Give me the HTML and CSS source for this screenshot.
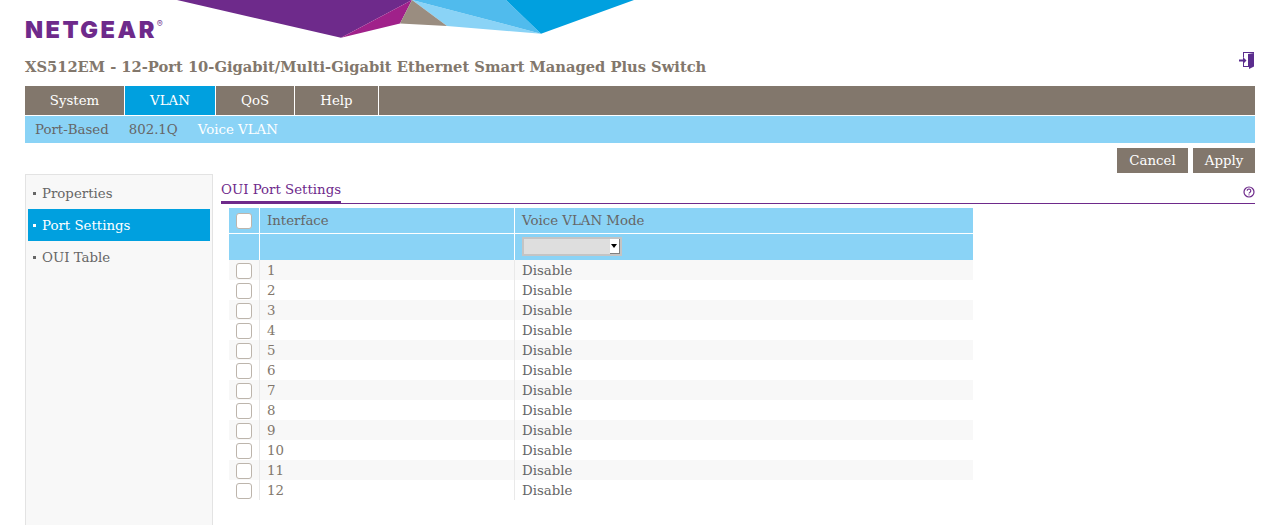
FILE: index.html
```html
<!DOCTYPE html>
<html lang="en">
<head>
<meta charset="utf-8">
<title>NETGEAR XS512EM</title>
<link rel="stylesheet" href="styles.css">
</head>
<body>
<div class="page">
  <header class="brand">
    <div class="logo">NETGEAR<sup class="reg">®</sup></div>
    <svg class="banner" width="460" height="38" viewBox="177 0 460 38" aria-hidden="true">
      <polygon fill="#6e2a8b" points="177,0 412,0 341,37.7"/>
      <polygon fill="#a0218a" points="341,37.7 412,0 400,23.5"/>
      <polygon fill="#8ad3f6" points="412,0 447,26 541,33.7"/>
      <polygon fill="#9a8d80" points="412,0 400,23.5 447,26"/>
      <polygon fill="#50bbed" points="412,0 506,0 541,33.7"/>
      <polygon fill="#00a0df" points="506,0 634,0 541,33.7"/>
    </svg>
  </header>
  <div class="titlebar">
    <h1 class="title">XS512EM - 12-Port 10-Gigabit/Multi-Gigabit Ethernet Smart Managed Plus Switch</h1>
    <svg class="exit" width="16" height="17" viewBox="0 0 16 17" aria-hidden="true">
      <path fill="#5b2d8e" d="M4 0h11v1H5v4.500H4zM4 11h1v3h4v1H4z"/>
      <path fill="#5b2d8e" d="M9 2l6-1v13.500l-5 2.500v-2H9z"/>
      <path fill="#5b2d8e" d="M0 7.500h4V5l3.500 3.500L4 12V9.500H0z"/>
    </svg>
  </div>
  <nav class="tabs">
    <a class="tab tab-system">System</a>
    <a class="tab tab-vlan active">VLAN</a>
    <a class="tab tab-qos">QoS</a>
    <a class="tab tab-help">Help</a>
  </nav>
  <nav class="subtabs">
    <a class="subtab">Port-Based</a>
    <a class="subtab">802.1Q</a>
    <a class="subtab current">Voice VLAN</a>
  </nav>
  <div class="actions">
    <button class="btn btn-cancel">Cancel</button>
    <button class="btn btn-apply">Apply</button>
  </div>
  <div class="main">
    <aside class="side">
      <a class="side-item">Properties</a>
      <a class="side-item active">Port Settings</a>
      <a class="side-item">OUI Table</a>
    </aside>
    <section class="content">
      <div class="section-head">
        <h2 class="section-title">OUI Port Settings</h2>
        <svg class="help" width="12" height="12" viewBox="0 0 12 12" aria-hidden="true">
          <circle cx="6" cy="6" r="5" fill="none" stroke="#6e2a8b" stroke-width="1.2"/>
          <path d="M4.200 4.800a1.800 1.700 0 1 1 2.800 1.400c-.6.400-1 .7-1 1.400" fill="none" stroke="#6e2a8b" stroke-width="1.100"/>
          <rect x="5.500" y="8.300" width="1" height="1.100" fill="#6e2a8b"/>
        </svg>
      </div>
      <table class="grid">
        <thead>
          <tr class="head-row"><th class="c-check"><span class="check"></span></th><th class="c-if">Interface</th><th class="c-mode">Voice VLAN Mode</th></tr>
          <tr class="edit-row"><th class="c-check"></th><th class="c-if"></th><th class="c-mode"><span class="select"><span class="select-arrow"></span></span></th></tr>
        </thead>
        <tbody>
          <tr><td class="c-check"><span class="check"></span></td><td class="c-if">1</td><td class="c-mode">Disable</td></tr>
          <tr><td class="c-check"><span class="check"></span></td><td class="c-if">2</td><td class="c-mode">Disable</td></tr>
          <tr><td class="c-check"><span class="check"></span></td><td class="c-if">3</td><td class="c-mode">Disable</td></tr>
          <tr><td class="c-check"><span class="check"></span></td><td class="c-if">4</td><td class="c-mode">Disable</td></tr>
          <tr><td class="c-check"><span class="check"></span></td><td class="c-if">5</td><td class="c-mode">Disable</td></tr>
          <tr><td class="c-check"><span class="check"></span></td><td class="c-if">6</td><td class="c-mode">Disable</td></tr>
          <tr><td class="c-check"><span class="check"></span></td><td class="c-if">7</td><td class="c-mode">Disable</td></tr>
          <tr><td class="c-check"><span class="check"></span></td><td class="c-if">8</td><td class="c-mode">Disable</td></tr>
          <tr><td class="c-check"><span class="check"></span></td><td class="c-if">9</td><td class="c-mode">Disable</td></tr>
          <tr><td class="c-check"><span class="check"></span></td><td class="c-if">10</td><td class="c-mode">Disable</td></tr>
          <tr><td class="c-check"><span class="check"></span></td><td class="c-if">11</td><td class="c-mode">Disable</td></tr>
          <tr><td class="c-check"><span class="check"></span></td><td class="c-if">12</td><td class="c-mode">Disable</td></tr>
        </tbody>
      </table>
    </section>
  </div>
</div>
</body>
</html>
```
FILE: styles.css
```css
* { box-sizing: border-box; }
html, body { margin: 0; height: 525px; overflow: hidden; background: #fff; }
body { font-family: "DejaVu Serif", serif; font-size: 13.33px; color: #666; }
.page { padding: 0 25px; height: 525px; display: flex; flex-direction: column; }

.brand { display: flex; height: 48px; align-items: flex-start; flex: none; }
.logo { font-family: Inter, "Liberation Sans", sans-serif; font-weight: 900; font-size: 23.5px; line-height: 20px; letter-spacing: 2.5px; color: #6e2a8b; margin-top: 20px; width: 152px; white-space: nowrap; }
.reg { font-size: 9px; line-height: 0; vertical-align: 11px; letter-spacing: 0; font-weight: 400; color: #7d4a98; }
.banner { display: block; flex: none; }

.titlebar { display: flex; justify-content: space-between; height: 38px; flex: none; }
.title { margin: 10px 0 0; font-size: 14.68px; line-height: 18px; font-weight: 700; color: #82776c; white-space: nowrap; }
.exit { margin-top: 4px; }

.tabs { display: flex; height: 29px; background: #82776c; flex: none; }
.tab { display: flex; align-items: center; justify-content: center; color: #fff; border-right: 1px solid #fff; }
.tab-system { width: 100px; }
.tab-vlan { width: 91px; }
.tab-qos { width: 79px; }
.tab-help { width: 84px; }
.tab.active { background: #00a0df; }

.subtabs { display: flex; gap: 20px; height: 27px; margin-top: 1px; padding-left: 10px; align-items: center; background: #8ad3f6; flex: none; }
.subtab { color: #666; }
.subtab.current { color: #fff; }

.actions { display: flex; justify-content: flex-end; gap: 5px; margin-top: 5px; flex: none; }
.btn { height: 25px; padding: 0; border: 0; background: #82776c; color: #fff; font: inherit; }
.btn-cancel { width: 71px; }
.btn-apply { width: 62px; }

.main { display: flex; flex: 1; margin-top: 1px; min-height: 0; }
.side { width: 188px; flex: none; background: #f8f8f8; border: 1px solid #e3e3e3; border-bottom: 0; padding: 2px 2px 0; }
.side-item { display: flex; align-items: center; height: 32px; padding-left: 14px; position: relative; color: #666; }
.side-item::before { content: ""; position: absolute; left: 5px; top: 15px; width: 3px; height: 3px; background: #666; }
.side-item.active { background: #00a0df; color: #fff; }
.side-item.active::before { background: #fff; }

.content { flex: 1; padding-left: 8px; min-width: 0; }
.section-head { display: flex; justify-content: space-between; align-items: flex-start; height: 30px; border-bottom: 1px solid #6e2a8b; }
.section-title { margin: 0; padding-top: 8px; font-size: 13.33px; line-height: 16px; font-weight: 400; color: #6e2a8b; border-bottom: 3px solid #6e2a8b; height: 30px; width: 120px; white-space: nowrap; }
.help { margin-top: 12px; }

.grid { border-collapse: separate; border-spacing: 0; table-layout: fixed; width: 744px; margin: 4px 0 0 8px; }
.grid th, .grid td { padding: 0 0 0 7px; font-weight: 400; text-align: left; }
.c-check { width: 31px; }
.c-if { width: 255px; }
.head-row th { height: 26px; background: #8ad3f6; border-right: 1px solid #fff; border-bottom: 1px solid #fff; }
.edit-row th { height: 26px; background: #8ad3f6; border-right: 1px solid #fff; vertical-align: top; padding-top: 3px; }
.head-row th:last-child, .edit-row th:last-child { border-right: 0; }
.grid td { height: 20px; line-height: 18px; padding-top: 2px; }
.grid td.c-if { color: #82776c; }
.grid td.c-check, .grid td.c-if { border-right: 1px solid #e9e9e9; }
.grid td.c-check { padding-top: 3px; padding-bottom: 1px; }
.grid tbody tr:nth-child(odd) { background: #f8f8f8; }
.check { display: block; width: 16px; height: 16px; background: #fff; border: 1px solid #bdb5ac; border-radius: 3px; }
.select { display: flex; justify-content: flex-end; width: 100px; height: 19px; background: #dedede; border: 2px solid #c4c4c4; }
.select-arrow { display: block; width: 10px; height: 15px; background: #fff; position: relative; border-right: 1px solid #808080; border-bottom: 1px solid #808080; }
.select-arrow::after { content: ""; position: absolute; left: 1px; top: 5px; border-left: 3.5px solid transparent; border-right: 3.5px solid transparent; border-top: 4px solid #000; }
```
